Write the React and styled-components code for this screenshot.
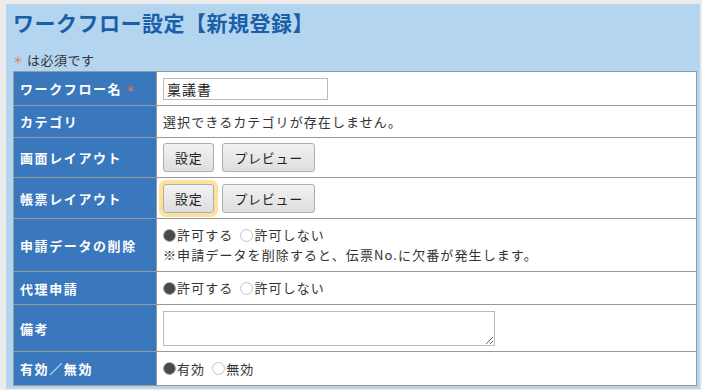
import React from "react";
import styled, { createGlobalStyle } from "styled-components";

const GlobalStyle = createGlobalStyle`
	body {
		margin: 0;
		background: #ebebeb;
		font-family: "Noto Sans CJK JP", "Noto Sans", sans-serif;
		color: #333;
	}
`;

const rows = [
	{ label: "ワークフロー名", required: true, height: 34, kind: "input" },
	{ label: "カテゴリ", height: 32, kind: "text" },
	{ label: "画面レイアウト", height: 40, kind: "buttons" },
	{ label: "帳票レイアウト", height: 41, kind: "buttons", focused: true },
	{ label: "申請データの削除", height: 53, kind: "delete" },
	{ label: "代理申請", height: 33, kind: "allow" },
	{ label: "備考", height: 47, kind: "memo" },
	{ label: "有効／無効", height: 34, kind: "active" },
];

function Radio({ checked, children }) {
	return (
		<RadioLabel>
			<RadioDot $checked={checked} />
			{children}
		</RadioLabel>
	);
}

function Value({ row }) {
	switch (row.kind) {
		case "input":
			return <TextInput defaultValue="稟議書" />;
		case "text":
			return <Plain>選択できるカテゴリが存在しません。</Plain>;
		case "buttons":
			return (
				<ButtonGroup>
					<Button $focused={row.focused}>設定</Button>
					<Button>プレビュー</Button>
				</ButtonGroup>
			);
		case "delete":
			return (
				<Stack>
					<RadioGroup>
						<Radio checked>許可する</Radio>
						<Radio>許可しない</Radio>
					</RadioGroup>
					<Plain>※申請データを削除すると、伝票No.に欠番が発生します。</Plain>
				</Stack>
			);
		case "allow":
			return (
				<RadioGroup>
					<Radio checked>許可する</Radio>
					<Radio>許可しない</Radio>
				</RadioGroup>
			);
		case "memo":
			return <Memo />;
		case "active":
			return (
				<RadioGroup>
					<Radio checked>有効</Radio>
					<Radio>無効</Radio>
				</RadioGroup>
			);
		default:
			return null;
	}
}

export default function App() {
	return (
		<Page>
			<GlobalStyle />
			<Panel>
				<Title>ワークフロー設定【新規登録】</Title>
				<Note>
					<Mark>＊</Mark> は必須です
				</Note>
				<FormTable>
					{rows.map((row) => (
						<Row key={row.label} $height={row.height}>
							<Label>
								{row.label}
								{row.required && <Mark $inLabel>＊</Mark>}
							</Label>
							<Cell $top={row.kind === "delete"}>
								<Value row={row} />
							</Cell>
						</Row>
					))}
				</FormTable>
			</Panel>
		</Page>
	);
}

const Page = styled.div`
	padding: 4px 2px 0 6px;
`;

const Panel = styled.section`
	background: #b3d5ef;
	padding: 0 3px 2px 7px;
	border-bottom: 1px solid #d6d6d6;
`;

const Title = styled.h1`
	margin: 0;
	font-size: 21px;
	line-height: 36px;
	font-weight: bold;
	color: #1b5fa8;
	letter-spacing: 0.5px;
`;

const Note = styled.p`
	margin: 11px 0 2px;
	font-size: 13px;
	line-height: 18px;
	color: #333;
	letter-spacing: 0.5px;
`;

const Mark = styled.span`
	color: #e8743b;
	font-size: 10px;
	font-weight: normal;
	margin-left: ${(p) => (p.$inLabel ? "3px" : "0")};
	vertical-align: 1px;
`;

const FormTable = styled.div`
	border: 1px solid #999;
	border-top: none;
	background: #fff;
`;

const Row = styled.div`
	display: grid;
	grid-template-columns: 143px 1fr;
	height: ${(p) => p.$height}px;
	border-top: 1px solid #999;
	box-sizing: border-box;
`;

const Label = styled.div`
	background: #3a78be;
	color: #fff;
	font-weight: bold;
	font-size: 13px;
	letter-spacing: 1.6px;
	border-right: 1px solid #999;
	display: flex;
	align-items: center;
	padding-left: 6px;
`;

const Cell = styled.div`
	display: flex;
	align-items: ${(p) => (p.$top ? "flex-start" : "center")};
	padding: ${(p) => (p.$top ? "6px 0 0 6px" : "0 0 0 6px")};
	font-size: 13px;
	letter-spacing: 1.1px;
`;

const Plain = styled.span`
	line-height: 20px;
`;

const Stack = styled.div`
	display: flex;
	flex-direction: column;
`;

const TextInput = styled.input`
	width: 165px;
	height: 22px;
	box-sizing: border-box;
	border: 1px solid #bbb;
	padding: 0 3px;
	font-family: inherit;
	font-size: 14px;
	color: #222;
	letter-spacing: 1px;
	outline: none;
`;

const ButtonGroup = styled.div`
	display: flex;
	gap: 8px;
`;

const Button = styled.button`
	height: 29px;
	padding: 0 11px;
	min-width: 49px;
	font-family: inherit;
	font-size: 13px;
	letter-spacing: 0.7px;
	color: #222;
	background: linear-gradient(#f2f2f2, #dedede);
	border: 1px solid #adadad;
	border-radius: 3px;
	box-shadow: ${(p) => (p.$focused ? "0 0 0 4px #fbe39b" : "none")};
	cursor: pointer;
`;

const RadioGroup = styled.div`
	display: flex;
	gap: 7px;
	line-height: 20px;
`;

const RadioLabel = styled.label`
	display: flex;
	align-items: center;
`;

const RadioDot = styled.span`
	width: 13px;
	height: 13px;
	border-radius: 50%;
	box-sizing: border-box;
	margin-right: 1px;
	background: ${(p) => (p.$checked ? "#4a4a4a" : "#fff")};
	border: 1px solid ${(p) => (p.$checked ? "#aaa" : "#c4c4c4")};
`;

const Memo = styled.textarea`
	width: 332px;
	height: 35px;
	box-sizing: border-box;
	border: 1px solid #bbb;
	font-family: inherit;
	outline: none;
`;
